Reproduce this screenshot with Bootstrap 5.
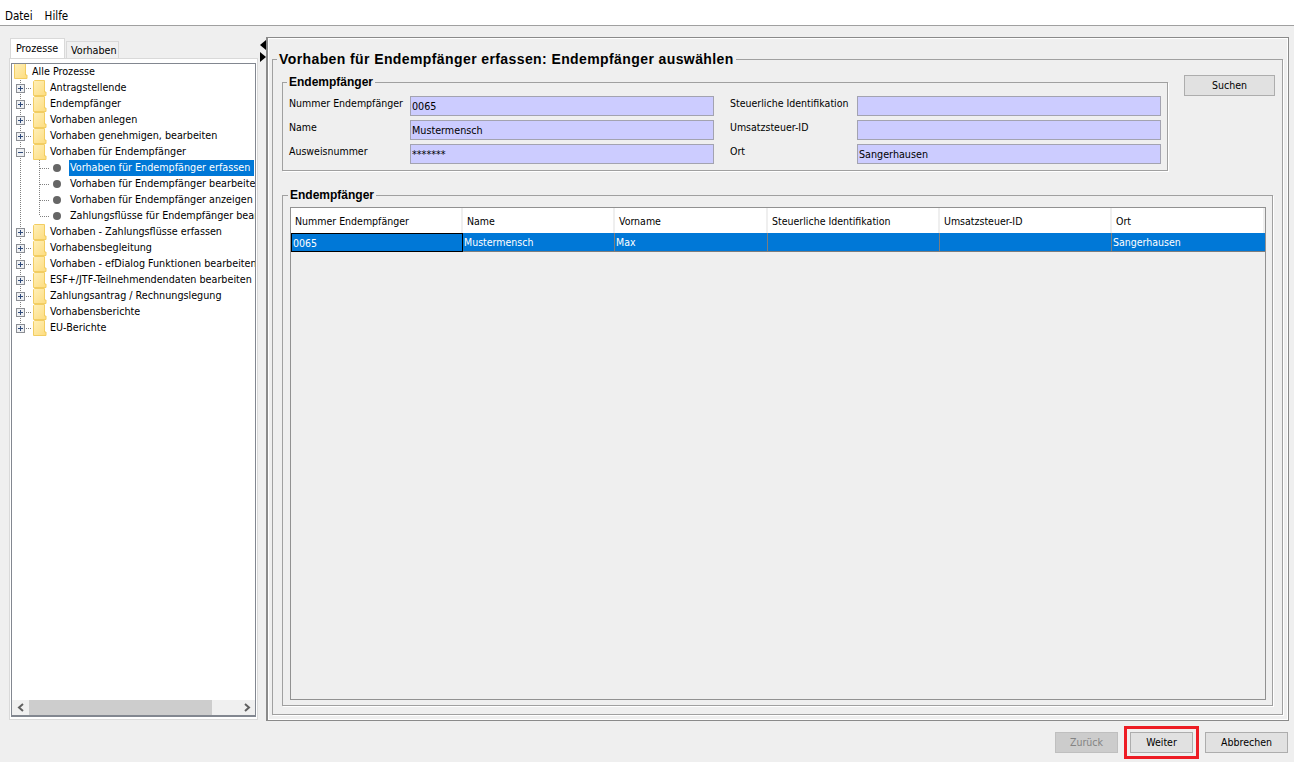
<!DOCTYPE html>
<html lang="de">
<head>
  <meta charset="UTF-8" />
  <meta name="viewport" content="width=device-width, initial-scale=1.0">
  <title>Vorhaben für Endempfänger erfassen</title>
  <link href="https://cdn.jsdelivr.net/npm/bootstrap@5.3.0/dist/css/bootstrap.min.css" rel="stylesheet">
  <style>
    html, body { height: 100%; }
    body { background: #efefef; color: #000; font-family: "DejaVu Sans Condensed", "DejaVu Sans", sans-serif; font-size: 10.5px; line-height: 16px; overflow: hidden; }

    .menu-strip { height: 26px; background: #fff; border-bottom: 1px solid #a0a0a0; padding: 6px 0 0 5px; gap: 12px; font-size: 11.5px; }

    .app-body { height: 695px; padding-top: 11px; }
    .left-col { width: 249px; margin-left: 9px; padding-top: 1px; margin-bottom: 1px; }

    .proc-tabs { border: 0; height: 20px; padding-left: 1px; gap: 1px; flex-wrap: nowrap; }
    .proc-tabs .nav-link { color: #000; padding: 0 5px; border-radius: 0; margin: 0; line-height: 16px; font-size: 10.7px; }
    .proc-tabs .nav-link.active { background: #fff; color: #000; height: 20px; width: 55px; padding: 2px 5px; border: 1px solid #d9d9d9; border-bottom: 0; }
    .proc-tabs .nav-link.other { background: #f0f0f0; height: 17px; width: 53px; margin-top: 3px; padding: 1px 4px 0; border: 1px solid #d9d9d9; border-bottom: 0; }

    .tab-box { background: #fff; border: 1px solid #d9d9d9; padding: 4px 1px 2px 1px; min-height: 0; }
    .tree-box { border: 1px solid #828790; border-bottom-width: 2px; min-height: 0; }
    .tree-scroll { overflow: hidden; font-size: 10.7px; }
    .tree-line { height: 16px; white-space: nowrap; }
    .tree-line svg { flex: none; display: block; }
    .tree-text { padding-left: 2px; }
    .tree-text.leaf-text { padding-left: 1px; }
    .tree-line.picked .tree-text { background: #0078d7; color: #fff; padding-left: 1px; width: 185px; }
    .h-scroll { height: 15px; background: #f0f0f0; }
    .h-thumb { width: 183px; height: 100%; background: #cdcdcd; }
    .h-arrow { width: 17px; }

    .split-bar { width: 8px; padding-top: 3px; }
    .tri-left { width: 0; height: 0; border-style: solid; border-width: 5px 6px 5px 0; border-color: transparent #000 transparent transparent; margin: 0 0 2px 2px; }
    .tri-right { width: 0; height: 0; border-style: solid; border-width: 5.5px 0 5.5px 6px; border-color: transparent transparent transparent #000; margin-left: 2px; }

    .work-pane { width: 1023px; border: 1px solid #8a8a8a; border-left-width: 2px; box-shadow: inset 1px 1px 0 #fff, inset -1px -1px 0 #fff; padding: 13px 5px 5px 4px; }

    .group-box { border: 1px solid #a0a0a0; box-shadow: 1px 1px 0 #fff; min-width: 0; }
    .group-box > legend { float: none; width: auto; margin: 0 0 0 -2px; padding: 0 2px; font-family: "Liberation Sans", Arial, sans-serif; font-weight: 700; font-size: 12px; line-height: 14px; }
    .outer-group { padding: 7px 7px 8px 9px; }
    .outer-group > legend { font-size: 14px; line-height: 17px; margin-left: -5px; letter-spacing: .4px; }
    .filter-group { width: 886px; flex: none; padding: 7px 6px 6px 6px; }
    .filter-grid { display: grid; grid-template-columns: 121px 304px 143px 304px; row-gap: 4px; }
    .filter-grid label { line-height: 14px; white-space: nowrap; }
    .filter-grid label.right-lbl { margin-left: 16px; }
    .blue-input.form-control { height: 20px; min-height: 0; padding: 1px; border: 1px solid #a3a3b0; border-radius: 0; background: #ccf; color: #000; font-size: 10.7px; line-height: 16px; }
    .blue-input.form-control:focus { box-shadow: none; }

    .win-btn.btn { background: #e1e1e1; border: 1px solid #adadad; border-radius: 0; color: #000; font-size: 10.5px; line-height: 16px; height: 21px; padding: 0 4px 1px; }
    .win-btn.btn:disabled { background: #ccc; border-color: #bfbfbf; color: #838383; opacity: 1; }
    .search-btn { width: 91px; flex: none; margin-left: 16px; }

    .list-group-box { margin: 17px 2px 0 0; padding: 5px 6px 5px 7px; min-height: 0; }
    .grid-box { border: 1px solid #919191; background: #efefef; }
    .grid-box .data-grid { table-layout: fixed; width: 974px; margin: 0; border-collapse: separate; border-spacing: 0; font-size: 10.5px; }
    .data-grid th, .data-grid td { font-weight: 400; overflow: hidden; white-space: nowrap; vertical-align: middle; }
    .data-grid th { height: 25px; background: #fff; padding: 0 4px; border-right: 2px solid #efefef; color: #000; }
    .data-grid td { height: 19px; background: #0078d7; color: #fff; padding: 0 1px; border-right: 1px solid #7d7d7d; border-bottom: 1px solid #7d7d7d; }
    .data-grid td.cell-focus { border: 1px solid #000; padding: 0 1px; }
    .data-grid td:last-child { border-right: 0; }

    .foot-bar { height: 41px; gap: 12px; padding: 11px 6px 0 0; }
    .foot-bar .win-btn { width: 63px; }
    .foot-bar .win-btn.wide-btn { width: 83px; }
    .red-mark { outline: 3px solid #ed1c24; outline-offset: 3px; }
  </style>
</head>
<body>

<!-- shared tree icons -->
<svg width="0" height="0" class="d-block">
  <defs>
    <linearGradient id="folderFill" x1="0" y1="0" x2="1" y2="1">
      <stop offset="0" stop-color="#fff0ba" />
      <stop offset="1" stop-color="#fddc7e" />
    </linearGradient>
    <symbol id="folder" viewBox="0 0 14 16">
      <path d="M.5 1.500l1-1h10v11.500h1.500v3.500H.5z" fill="url(#folderFill)" stroke="#f2cd62" />
    </symbol>
    <symbol id="plusBox" viewBox="0 0 9 9">
      <rect x=".5" y=".5" width="8" height="8" fill="#eef0f3" stroke="#8b8e94" />
      <path d="M2 4.500h5M4.500 2v5" stroke="#2f4a7a" shape-rendering="crispEdges" />
    </symbol>
    <symbol id="minusBox" viewBox="0 0 9 9">
      <rect x=".5" y=".5" width="8" height="8" fill="#eef0f3" stroke="#8b8e94" />
      <path d="M2 4.500h5" stroke="#2f4a7a" shape-rendering="crispEdges" />
    </symbol>
    <symbol id="branch" viewBox="0 0 36 16">
      <path d="M8.500 0v16M14 8.500h6" stroke="#808080" stroke-dasharray="1 1" fill="none" />
      <use href="#plusBox" x="4" y="4" width="9" height="9" />
      <use href="#folder" x="21" y="0" width="14" height="16" />
    </symbol>
    <symbol id="leaf" viewBox="0 0 57 16">
      <path d="M8.500 0v16M27.500 0v16M28 8.500h10" stroke="#808080" stroke-dasharray="1 1" fill="none" />
      <circle cx="45" cy="8" r="4" fill="#666" />
    </symbol>
  </defs>
</svg>

<div class="menu-strip d-flex align-items-center">
  <span>Datei</span>
  <span>Hilfe</span>
</div>

<div class="app-body d-flex">
  <div class="left-col d-flex flex-column">
    <ul class="nav proc-tabs">
      <li class="nav-item"><a class="nav-link active" href="#">Prozesse</a></li>
      <li class="nav-item"><a class="nav-link other" href="#">Vorhaben</a></li>
    </ul>
    <div class="tab-box flex-grow-1 d-flex flex-column">
      <div class="tree-box flex-grow-1 d-flex flex-column">
        <div class="tree-scroll flex-grow-1">
          <div class="tree-line d-flex align-items-center">
            <svg width="18" height="16"><use href="#folder" x="2" y="-1" width="14" height="16" /></svg>
            <span class="tree-text">Alle Prozesse</span>
          </div>
          <div class="tree-line d-flex align-items-center"><svg width="36" height="16"><use href="#branch" /></svg><span class="tree-text">Antragstellende</span></div>
          <div class="tree-line d-flex align-items-center"><svg width="36" height="16"><use href="#branch" /></svg><span class="tree-text">Endempfänger</span></div>
          <div class="tree-line d-flex align-items-center"><svg width="36" height="16"><use href="#branch" /></svg><span class="tree-text">Vorhaben anlegen</span></div>
          <div class="tree-line d-flex align-items-center"><svg width="36" height="16"><use href="#branch" /></svg><span class="tree-text">Vorhaben genehmigen, bearbeiten</span></div>
          <div class="tree-line d-flex align-items-center">
            <svg width="36" height="16">
              <path d="M8.500 0v16M14 8.500h6" stroke="#808080" stroke-dasharray="1 1" fill="none" />
              <use href="#minusBox" x="4" y="4" width="9" height="9" />
              <use href="#folder" x="21" y="0" width="14" height="16" />
            </svg>
            <span class="tree-text">Vorhaben für Endempfänger</span>
          </div>
          <div class="tree-line picked d-flex align-items-center"><svg width="57" height="16"><use href="#leaf" /></svg><span class="tree-text">Vorhaben für Endempfänger erfassen</span></div>
          <div class="tree-line d-flex align-items-center"><svg width="57" height="16"><use href="#leaf" /></svg><span class="tree-text leaf-text">Vorhaben für Endempfänger bearbeiten</span></div>
          <div class="tree-line d-flex align-items-center"><svg width="57" height="16"><use href="#leaf" /></svg><span class="tree-text leaf-text">Vorhaben für Endempfänger anzeigen</span></div>
          <div class="tree-line d-flex align-items-center">
            <svg width="57" height="16">
              <path d="M8.500 0v16M27.500 0v8M28 8.500h10" stroke="#808080" stroke-dasharray="1 1" fill="none" />
              <circle cx="45" cy="8" r="4" fill="#666" />
            </svg>
            <span class="tree-text leaf-text">Zahlungsflüsse für Endempfänger bearbeiten</span>
          </div>
          <div class="tree-line d-flex align-items-center"><svg width="36" height="16"><use href="#branch" /></svg><span class="tree-text">Vorhaben - Zahlungsflüsse erfassen</span></div>
          <div class="tree-line d-flex align-items-center"><svg width="36" height="16"><use href="#branch" /></svg><span class="tree-text">Vorhabensbegleitung</span></div>
          <div class="tree-line d-flex align-items-center"><svg width="36" height="16"><use href="#branch" /></svg><span class="tree-text">Vorhaben - efDialog Funktionen bearbeiten</span></div>
          <div class="tree-line d-flex align-items-center"><svg width="36" height="16"><use href="#branch" /></svg><span class="tree-text">ESF+/JTF-Teilnehmendendaten bearbeiten</span></div>
          <div class="tree-line d-flex align-items-center"><svg width="36" height="16"><use href="#branch" /></svg><span class="tree-text">Zahlungsantrag / Rechnungslegung</span></div>
          <div class="tree-line d-flex align-items-center"><svg width="36" height="16"><use href="#branch" /></svg><span class="tree-text">Vorhabensberichte</span></div>
          <div class="tree-line d-flex align-items-center">
            <svg width="36" height="16">
              <path d="M8.500 0v8M14 8.500h6" stroke="#808080" stroke-dasharray="1 1" fill="none" />
              <use href="#plusBox" x="4" y="4" width="9" height="9" />
              <use href="#folder" x="21" y="0" width="14" height="16" />
            </svg>
            <span class="tree-text">EU-Berichte</span>
          </div>
        </div>
        <div class="h-scroll d-flex">
          <div class="h-arrow d-flex align-items-center justify-content-center">
            <svg width="8" height="9" viewBox="0 0 8 9"><path d="M6 1L2 4.500l4 3.500" fill="none" stroke="#606060" stroke-width="2" /></svg>
          </div>
          <div class="h-thumb"></div>
          <div class="flex-grow-1"></div>
          <div class="h-arrow d-flex align-items-center justify-content-center">
            <svg width="8" height="9" viewBox="0 0 8 9"><path d="M2 1l4 3.500L2 8" fill="none" stroke="#606060" stroke-width="2" /></svg>
          </div>
        </div>
      </div>
    </div>
  </div>

  <div class="split-bar">
    <div class="tri-left"></div>
    <div class="tri-right"></div>
  </div>

  <div class="work-pane d-flex">
    <fieldset class="group-box outer-group d-flex flex-column flex-grow-1">
      <legend>Vorhaben für Endempfänger erfassen: Endempfänger auswählen</legend>
      <div class="d-flex align-items-start">
        <fieldset class="group-box filter-group">
          <legend>Endempfänger</legend>
          <div class="filter-grid">
            <label>Nummer Endempfänger</label>
            <input class="form-control blue-input" readonly value="0065">
            <label class="right-lbl">Steuerliche Identifikation</label>
            <input class="form-control blue-input" readonly value="">
            <label>Name</label>
            <input class="form-control blue-input" readonly value="Mustermensch">
            <label class="right-lbl">Umsatzsteuer-ID</label>
            <input class="form-control blue-input" readonly value="">
            <label>Ausweisnummer</label>
            <input class="form-control blue-input" readonly value="*******">
            <label class="right-lbl">Ort</label>
            <input class="form-control blue-input" readonly value="Sangerhausen">
          </div>
        </fieldset>
        <button class="btn win-btn search-btn" type="button">Suchen</button>
      </div>

      <fieldset class="group-box list-group-box flex-grow-1 d-flex flex-column">
        <legend>Endempfänger</legend>
        <div class="grid-box flex-grow-1">
          <table class="data-grid">
            <colgroup>
              <col style="width:172px"><col style="width:152px"><col style="width:153px"><col style="width:172px"><col style="width:172px"><col style="width:153px">
            </colgroup>
            <thead>
              <tr>
                <th>Nummer Endempfänger</th>
                <th>Name</th>
                <th>Vorname</th>
                <th>Steuerliche Identifikation</th>
                <th>Umsatzsteuer-ID</th>
                <th>Ort</th>
              </tr>
            </thead>
            <tbody>
              <tr>
                <td class="cell-focus">0065</td>
                <td>Mustermensch</td>
                <td>Max</td>
                <td></td>
                <td></td>
                <td>Sangerhausen</td>
              </tr>
            </tbody>
          </table>
        </div>
      </fieldset>
    </fieldset>
  </div>
</div>

<div class="foot-bar d-flex justify-content-end align-items-start">
  <button class="btn win-btn" type="button" disabled>Zurück</button>
  <button class="btn win-btn red-mark" type="button">Weiter</button>
  <button class="btn win-btn wide-btn" type="button">Abbrechen</button>
</div>

<script src="https://cdn.jsdelivr.net/npm/bootstrap@5.3.0/dist/js/bootstrap.bundle.min.js"></script>
</body>
</html>
